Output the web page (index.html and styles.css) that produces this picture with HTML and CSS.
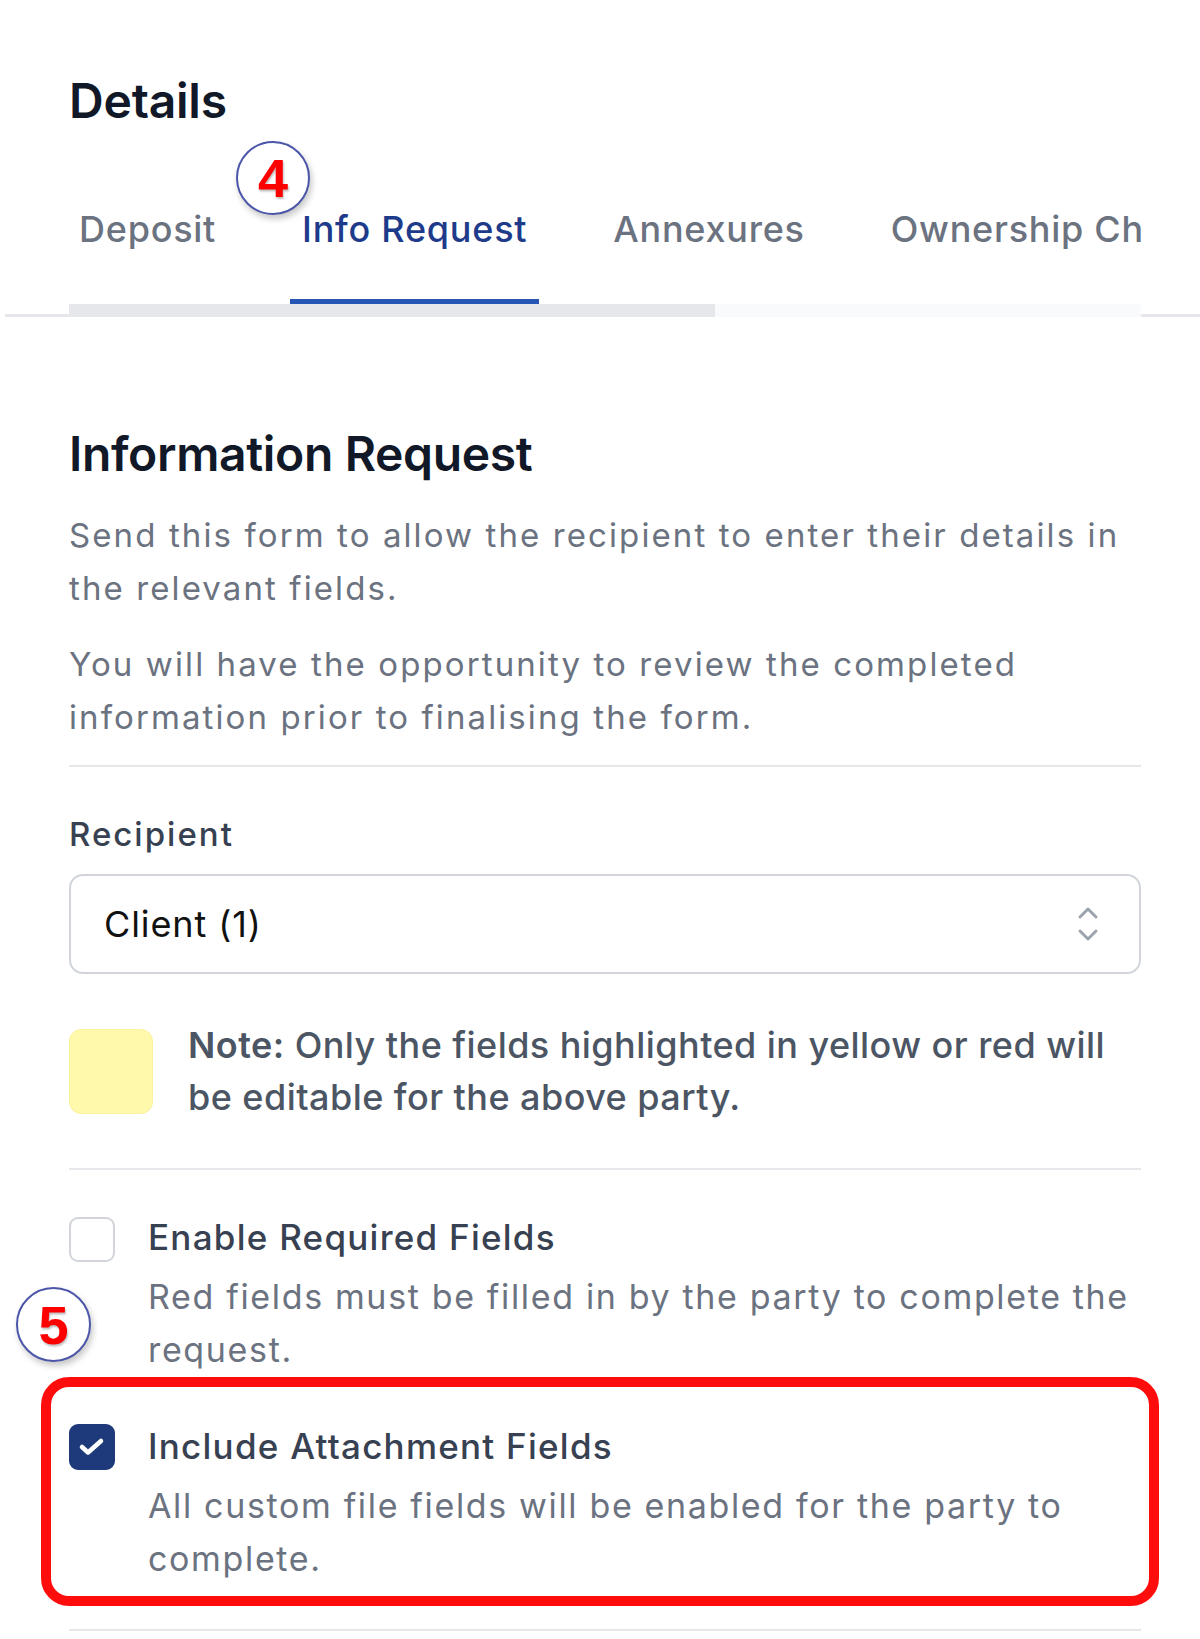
FILE: index.html
```html
<!DOCTYPE html>
<html lang="en">
<head>
<meta charset="utf-8">
<title>Details</title>
<link rel="stylesheet" href="styles.css">
</head>
<body>
<div class="page">
  <h1 class="title">Details</h1>
  <div class="tabs-wrap">
    <div class="tabs-scroll">
      <div class="tabs">
        <div class="tab">Deposit</div>
        <div class="tab active">Info Request</div>
        <div class="tab">Annexures</div>
        <div class="tab">Ownership Change</div>
      </div>
      <div class="scrollbar"><div class="thumb"></div></div>
    </div>
  </div>

  <div class="section">
    <h2 class="heading">Information Request</h2>
    <p class="text first">Send this form to allow the recipient to enter their details in the relevant fields.</p>
    <p class="text second">You will have the opportunity to review the completed information prior to finalising the form.</p>
    <div class="rule rule-a"></div>

    <div class="label">Recipient</div>
    <div class="select">
      <span class="select-value">Client (1)</span>
      <svg class="chev" width="24" height="40" viewBox="0 0 24 40"><path d="M4 13 L12 5 L20 13" fill="none" stroke="#9ca3af" stroke-width="3" stroke-linecap="round" stroke-linejoin="round"/><path d="M4 27 L12 35 L20 27" fill="none" stroke="#9ca3af" stroke-width="3" stroke-linecap="round" stroke-linejoin="round"/></svg>
    </div>

    <div class="note">
      <div class="swatch"></div>
      <div class="note-text"><strong>Note:</strong> Only the fields highlighted in yellow or red will be editable for the above party.</div>
    </div>
    <div class="rule rule-b"></div>

    <div class="option opt-1">
      <div class="check"></div>
      <div class="opt-body">
        <div class="opt-label">Enable Required Fields</div>
        <div class="opt-desc">Red fields must be filled in by the party to complete the request.</div>
      </div>
    </div>
    <div class="option opt-2">
      <div class="check checked"><svg width="46" height="46" viewBox="0 0 46 46"><path d="M13 23 L19 28.5 L32 17" fill="none" stroke="#fff" stroke-width="4.5" stroke-linecap="round" stroke-linejoin="round"/></svg></div>
      <div class="opt-body">
        <div class="opt-label">Include Attachment Fields</div>
        <div class="opt-desc">All custom file fields will be enabled for the party to complete.</div>
      </div>
    </div>
    <div class="rule rule-c"></div>
  </div>

  <div class="marker m4">4</div>
  <div class="marker m5">5</div>
  <div class="highlight"></div>
</div>
</body>
</html>
```
FILE: styles.css
```css
* { box-sizing: border-box; }
body { margin: 0; background: #fff; font-family: Inter, "Noto Sans", sans-serif; }
.page { position: relative; width: 1200px; height: 1639px; overflow: hidden; }

.title { margin: 0; padding: 69px 0 0 69px; font-size: 48px; line-height: 64px; font-weight: 600; color: #111827; letter-spacing: -0.2px; }

.tabs-wrap { margin: 69px 0 0 5px; padding: 0 59px 0 64px; border-bottom: 3px solid #e5e7eb; }
.tabs-scroll { overflow: hidden; margin-bottom: -3px; }
.tabs { display: flex; gap: 62px; white-space: nowrap; margin-left: -2px; }
.tab { flex: none; padding: 0 12px 43px; font-size: 36px; line-height: 54px; font-weight: 500; color: #6b7280; letter-spacing: 0.75px; border-bottom: 5px solid transparent; }
.tab.active { color: #1e3a8a; border-bottom-color: #2656b5; }
.scrollbar { height: 13px; background: #f9fafb; }
.thumb { width: 646px; height: 13px; background: #e5e7eb; }

.section { padding: 0 59px 0 69px; }
.heading { margin: 105px 0 0; font-size: 48px; line-height: 64px; font-weight: 600; color: #111827; letter-spacing: -0.35px; }
.text { margin: 0; font-size: 33px; line-height: 53.3px; color: #6b7280; letter-spacing: 2.1px; }
.text.first { margin-top: 23px; }
.text.second { margin-top: 22px; }
.rule { height: 2px; background: #e5e7eb; }
.rule-a { margin-top: 21px; }
.rule-b { margin-top: 45px; }
.rule-c { margin-top: 44px; }

.label { margin-top: 41px; font-size: 33px; line-height: 53.3px; font-weight: 500; color: #374151; letter-spacing: 2px; }
.select { margin-top: 13px; height: 100px; border: 2px solid #d1d5db; border-radius: 14px; display: flex; align-items: center; justify-content: space-between; padding: 0 39px 0 33px; }
.select-value { font-size: 36px; color: #111111; letter-spacing: 0.9px; }
.chev { display: block; }

.note { margin-top: 45px; display: flex; align-items: flex-start; gap: 35px; }
.swatch { flex: none; width: 84px; height: 85px; margin-top: 10px; background: #fef9ab; border: 1px solid #fdf1a0; border-radius: 12px; }
.note-text { font-size: 36px; line-height: 52px; font-weight: 500; color: #4b5563; letter-spacing: 0.45px; }
.note-text strong { font-weight: 600; }

.option { display: flex; gap: 33px; align-items: flex-start; }
.opt-1 { margin-top: 42px; }
.opt-2 { margin-top: 45px; }
.check { flex: none; width: 46px; height: 45px; margin-top: 5px; border: 2px solid #d1d5db; border-radius: 9px; background: #fff; }
.check.checked { background: #1e3a7b; border-color: #1e3a7b; height: 46px; margin-top: 3px; position: relative; }
.check.checked svg { position: absolute; left: -2px; top: -2px; }
.opt-label { font-size: 35px; line-height: 50px; font-weight: 500; color: #374151; letter-spacing: 1.25px; }
.opt-desc { margin-top: 8px; font-size: 34px; line-height: 53px; color: #6b7280; letter-spacing: 1.65px; }

.marker { position: absolute; display: flex; align-items: center; justify-content: center; width: 74px; height: 74px; border: 2px solid #4b56a8; border-radius: 50%; background: #fff; box-shadow: 2px 4px 6px rgba(0,0,0,0.22); font-family: "Liberation Sans", Arial, sans-serif; font-weight: 700; font-size: 54px; color: #ff0000; text-shadow: 1px 2px 2px rgba(0,0,0,0.25); }
.m4 { left: 236px; top: 141px; }
.m5 { left: 16px; top: 1287px; width: 75px; height: 75px; }
.highlight { position: absolute; left: 41px; top: 1377px; width: 1118px; height: 229px; border: 10px solid #ff0d0d; border-radius: 28px; }
```
